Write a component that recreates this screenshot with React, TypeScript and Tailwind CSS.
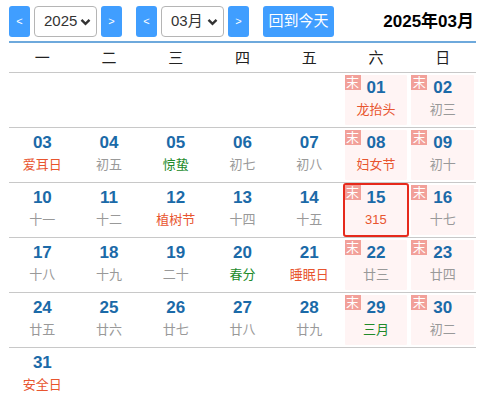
import React from 'react';

type Day = { d: string; lunar: string; tone: 'gray' | 'red' | 'green'; weekend?: boolean; today?: boolean } | null;

const weeks: Day[][] = [
  [null, null, null, null, null, { d: '01', lunar: '龙抬头', tone: 'red', weekend: true }, { d: '02', lunar: '初三', tone: 'gray', weekend: true }],
  [
    { d: '03', lunar: '爱耳日', tone: 'red' },
    { d: '04', lunar: '初五', tone: 'gray' },
    { d: '05', lunar: '惊蛰', tone: 'green' },
    { d: '06', lunar: '初七', tone: 'gray' },
    { d: '07', lunar: '初八', tone: 'gray' },
    { d: '08', lunar: '妇女节', tone: 'red', weekend: true },
    { d: '09', lunar: '初十', tone: 'gray', weekend: true },
  ],
  [
    { d: '10', lunar: '十一', tone: 'gray' },
    { d: '11', lunar: '十二', tone: 'gray' },
    { d: '12', lunar: '植树节', tone: 'red' },
    { d: '13', lunar: '十四', tone: 'gray' },
    { d: '14', lunar: '十五', tone: 'gray' },
    { d: '15', lunar: '315', tone: 'red', weekend: true, today: true },
    { d: '16', lunar: '十七', tone: 'gray', weekend: true },
  ],
  [
    { d: '17', lunar: '十八', tone: 'gray' },
    { d: '18', lunar: '十九', tone: 'gray' },
    { d: '19', lunar: '二十', tone: 'gray' },
    { d: '20', lunar: '春分', tone: 'green' },
    { d: '21', lunar: '睡眠日', tone: 'red' },
    { d: '22', lunar: '廿三', tone: 'gray', weekend: true },
    { d: '23', lunar: '廿四', tone: 'gray', weekend: true },
  ],
  [
    { d: '24', lunar: '廿五', tone: 'gray' },
    { d: '25', lunar: '廿六', tone: 'gray' },
    { d: '26', lunar: '廿七', tone: 'gray' },
    { d: '27', lunar: '廿八', tone: 'gray' },
    { d: '28', lunar: '廿九', tone: 'gray' },
    { d: '29', lunar: '三月', tone: 'green', weekend: true },
    { d: '30', lunar: '初二', tone: 'gray', weekend: true },
  ],
  [{ d: '31', lunar: '安全日', tone: 'red' }, null, null, null, null, null, null],
];

const toneClass = { gray: 'text-[#999999]', red: 'text-[#e8552f]', green: 'text-[#218a2a]' };

const NavButton: React.FC<{ label: string }> = ({ label }) => (
  <button className="w-[21px] h-[31px] rounded-[3px] bg-[#409eff] text-white text-[11px] leading-none flex items-center justify-center">
    {label}
  </button>
);

const FakeSelect: React.FC<{ value: string }> = ({ value }) => (
  <div className="w-[63px] h-[31px] rounded-[4px] border border-[#b5b5b5] bg-white flex items-center justify-between pl-[9px] pr-[5px] text-[15px] text-[#333]">
    <span>{value}</span>
    <svg width="11" height="8" viewBox="0 0 11 8">
      <path d="M1.5 1.8 L5.5 5.8 L9.5 1.8" fill="none" stroke="#333" strokeWidth="2.4" />
    </svg>
  </div>
);

const Cell: React.FC<{ day: Day }> = ({ day }) => {
  if (!day) return <div />;
  return (
    <div
      className={`relative h-[54px] border-2 rounded-[3px] bg-clip-padding flex flex-col items-center pt-[3px] ${
        day.today ? 'border-[#e62a1c]' : 'border-transparent'
      } ${day.weekend ? 'bg-[#fff4f4]' : 'bg-white'}`}
    >
      {day.weekend && (
        <span className="absolute top-0 left-0 w-4 h-[15px] bg-[#f2a099] text-white text-[13px] leading-[15px] text-center">末</span>
      )}
      <span className="text-[17px] font-bold leading-[20px] text-[#1b6aa8]">{day.d}</span>
      <span className={`mt-[3px] text-[13px] leading-[18px] ${toneClass[day.tone]}`}>{day.lunar}</span>
    </div>
  );
};

export default function App() {
  return (
    <div className="w-[483px] h-[402px] bg-white overflow-hidden" style={{ fontFamily: '"Liberation Sans", "Noto Sans CJK SC", sans-serif' }}>
      <div className="flex items-center pt-[6px] pl-[9px] pr-[9px]">
        <div className="flex items-center gap-[4px]">
          <NavButton label="<" />
          <FakeSelect value="2025" />
          <NavButton label=">" />
        </div>
        <div className="flex items-center gap-[4px] ml-[14px]">
          <NavButton label="<" />
          <FakeSelect value="03月" />
          <NavButton label=">" />
        </div>
        <button className="ml-[14px] h-[31px] w-[71px] rounded-[3px] bg-[#409eff] text-white text-[15px]">回到今天</button>
        <div className="ml-auto text-[17px] font-bold text-black">2025年03月</div>
      </div>

      <div className="ml-[9px] mr-[7px] mt-[4px] border-t-2 border-[#6ea9dc]">
        <div className="grid grid-cols-7 h-[30px] border-b-[1.5px] border-[#c8c8c8] text-[15px] text-[#222]">
          {['一', '二', '三', '四', '五', '六', '日'].map((w) => (
            <div key={w} className="flex items-center justify-center pt-[2px]">
              {w}
            </div>
          ))}
        </div>
        {weeks.map((week, i) => (
          <div key={i} className={`grid grid-cols-7 ${i < weeks.length - 1 ? 'border-b-[1.5px] border-[#c8c8c8]' : ''}`}>
            {week.map((day, j) => (
              <Cell key={j} day={day} />
            ))}
          </div>
        ))}
      </div>
    </div>
  );
}
